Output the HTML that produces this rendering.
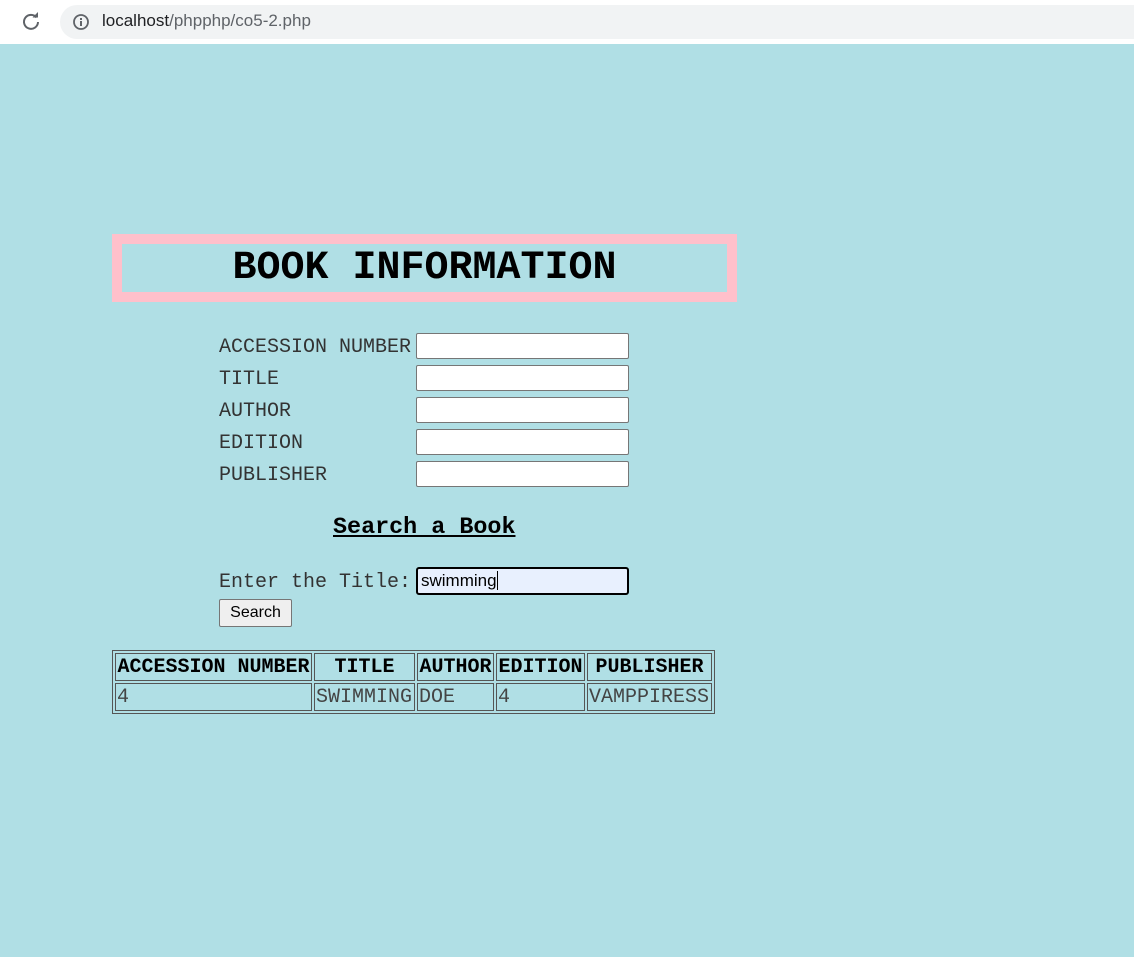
<!DOCTYPE html>
<html><head><style>
body{margin:0;width:1134px;height:957px;background:#b0dfe5;position:relative;overflow:hidden;font-family:"Liberation Mono",monospace;}
.bar{position:absolute;left:0;top:0;width:1134px;height:44px;background:#fff;}
.pill{position:absolute;left:60px;top:5px;width:1100px;height:34px;border-radius:17px;background:#f1f3f4;}
.url{position:absolute;left:102px;top:11px;font:17px "Liberation Sans",sans-serif;color:#202124;}
.url span{color:#5f6368}
.ab{position:absolute;}
.lbl{position:absolute;left:219px;font-size:20px;color:#333;}
.in{position:absolute;left:416px;width:211px;height:24px;border:1px solid #767676;border-radius:2px;background:#fff;}
table{position:absolute;left:112px;top:650px;border:1px solid #555;border-spacing:2px;font-size:20px;}
td,th{border:1px solid #555;padding:1px 1px 0 1px;height:25px;}
th{font-weight:bold;color:#000}
td{color:#444}
</style></head><body>
<div class="bar"><div class="pill"></div>
<svg class="ab" style="left:21px;top:11px" width="20" height="20" viewBox="0 0 20 20"><path d="M15.5 6.5A7 7 0 1 0 17 11" fill="none" stroke="#5f6368" stroke-width="2"/><path d="M11.5 6.5h5.5v-5.5z" fill="#5f6368"/></svg>
<svg class="ab" style="left:72px;top:13px" width="18" height="18" viewBox="0 0 18 18"><circle cx="9" cy="9" r="7" fill="none" stroke="#5f6368" stroke-width="1.8"/><rect x="8" y="8" width="2" height="5" fill="#5f6368"/><rect x="8" y="5" width="2" height="2" fill="#5f6368"/></svg>
<div class="url">localhost<span>/phpphp/co5-2.php</span></div></div>
<div class="ab" style="left:112px;top:234px;width:605px;height:48px;border:10px solid #ffc0cb;text-align:center;font-weight:bold;font-size:40px;line-height:50px;color:#000">BOOK INFORMATION</div>
<div class="lbl" style="top:336px">ACCESSION NUMBER</div><div class="in" style="top:333px"></div>
<div class="lbl" style="top:368px">TITLE</div><div class="in" style="top:365px"></div>
<div class="lbl" style="top:400px">AUTHOR</div><div class="in" style="top:397px"></div>
<div class="lbl" style="top:432px">EDITION</div><div class="in" style="top:429px"></div>
<div class="lbl" style="top:464px">PUBLISHER</div><div class="in" style="top:461px"></div>
<div class="ab" style="left:333px;top:515px;font-size:23.4px;font-weight:bold;text-decoration:underline;color:#000">Search a Book</div>
<div class="lbl" style="top:571px">Enter the Title:</div>
<div class="ab" style="left:416px;top:567px;height:24px;border:2px solid #000;border-radius:3px;background:#e8f0fe;font:17px 'Liberation Sans',sans-serif;line-height:24px;padding-left:3px;width:206px">swimming<span style="border-left:1px solid #000"></span></div>
<div class="ab" style="left:219px;top:599px;width:71px;height:26px;border:1px solid #767676;border-radius:2px;background:#efefef;font:16px 'Liberation Sans',sans-serif;line-height:26px;text-align:center;color:#000">Search</div>
<table><tr><th style="width:193px">ACCESSION NUMBER</th><th style="width:97px">TITLE</th><th style="width:73px">AUTHOR</th><th style="width:85px">EDITION</th><th style="width:121px">PUBLISHER</th></tr>
<tr><td>4</td><td>SWIMMING</td><td>DOE</td><td>4</td><td>VAMPPIRESS</td></tr></table>
</body></html>
